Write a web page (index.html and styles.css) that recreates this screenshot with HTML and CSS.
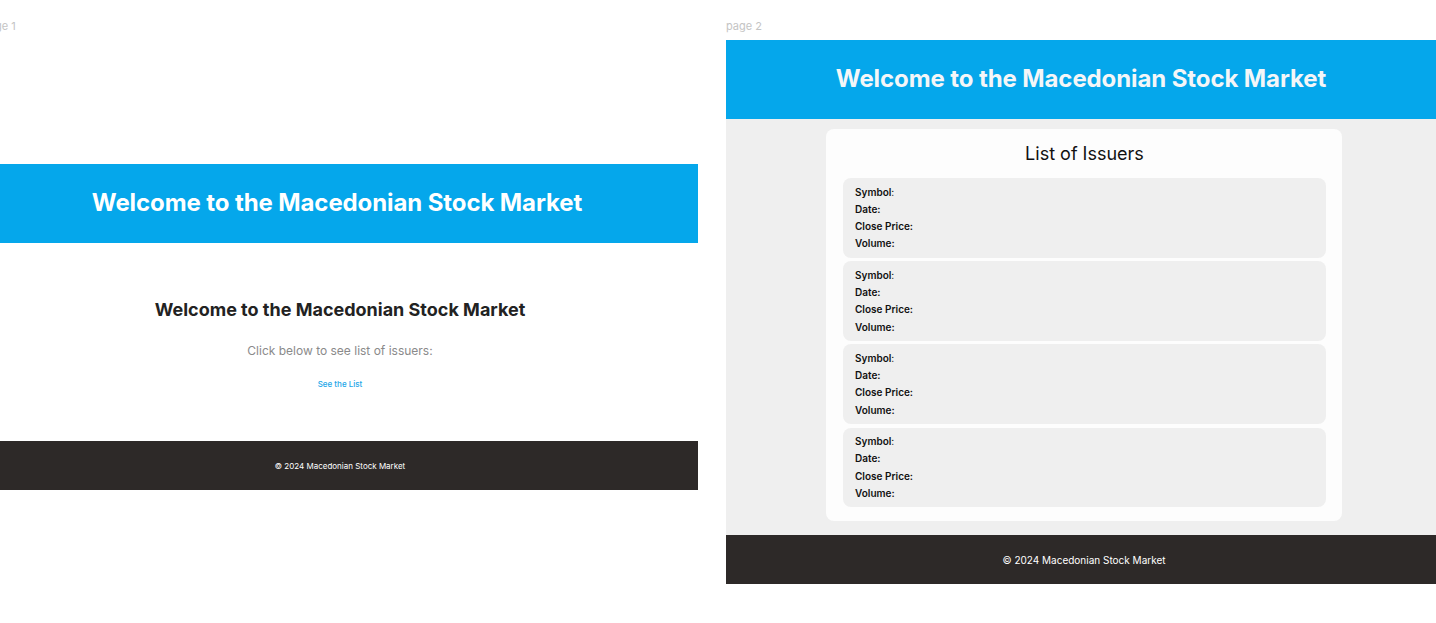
FILE: index.html
```html
<!DOCTYPE html>
<html lang="en">
<head>
<meta charset="utf-8">
<title>Macedonian Stock Market</title>
<link rel="stylesheet" href="styles.css">
</head>
<body>
<div class="canvas">
  <section class="board">
    <div class="board-label">page 1</div>
    <div class="frame frame-home">
      <header class="site-header">
        <h1>Welcome to the Macedonian Stock Market</h1>
      </header>
      <main class="home-main">
        <h2>Welcome to the Macedonian Stock Market</h2>
        <p class="lead">Click below to see list of issuers:</p>
        <a class="list-link" href="#">See the List</a>
      </main>
      <footer class="site-footer">© 2024 Macedonian Stock Market</footer>
    </div>
  </section>

  <section class="board">
    <div class="board-label">page 2</div>
    <div class="frame frame-list">
      <header class="site-header">
        <h1>Welcome to the Macedonian Stock Market</h1>
      </header>
      <main class="list-main">
        <div class="card">
          <h2 class="card-title">List of Issuers</h2>
          <div class="issuers">
            <div class="issuer">
              <div class="row">Symbol<span class="colon">:</span></div>
              <div class="row">Date:</div>
              <div class="row">Close Price:</div>
              <div class="row">Volume:</div>
            </div>
            <div class="issuer">
              <div class="row">Symbol<span class="colon">:</span></div>
              <div class="row">Date:</div>
              <div class="row">Close Price:</div>
              <div class="row">Volume:</div>
            </div>
            <div class="issuer">
              <div class="row">Symbol<span class="colon">:</span></div>
              <div class="row">Date:</div>
              <div class="row">Close Price:</div>
              <div class="row">Volume:</div>
            </div>
            <div class="issuer">
              <div class="row">Symbol<span class="colon">:</span></div>
              <div class="row">Date:</div>
              <div class="row">Close Price:</div>
              <div class="row">Volume:</div>
            </div>
          </div>
        </div>
      </main>
      <footer class="site-footer">© 2024 Macedonian Stock Market</footer>
    </div>
  </section>
</div>
</body>
</html>
```

FILE: styles.css
```css
* { box-sizing: border-box; }

html, body {
  margin: 0;
  padding: 0;
  background: #ffffff;
  overflow: hidden;
  font-family: Inter, "Noto Sans", sans-serif;
}

.canvas {
  display: flex;
  gap: 28px;
  margin-left: -18px;
  padding-top: 19px;
  width: 1500px;
}

.board {
  display: flex;
  flex-direction: column;
  width: 716px;
  flex: none;
}

.board-label {
  font-size: 11px;
  line-height: 14px;
  height: 14px;
  color: #c4c4c4;
  margin-bottom: 7px;
}

.frame {
  width: 716px;
  display: flex;
  flex-direction: column;
}

.frame-home {
  padding-top: 124px;
  background: #ffffff;
}

.site-header {
  background: #05a7eb;
  height: 79px;
  display: flex;
  align-items: center;
  justify-content: center;
  padding-right: 6px;
  padding-bottom: 2px;
}

.site-header h1 {
  margin: 0;
  color: #ffffff;
  font-size: 24px;
  font-weight: 700;
  letter-spacing: -0.1px;
}

.frame-list .site-header h1 {
  color: #f4f6f8;
}

.home-main {
  height: 198px;
  display: flex;
  flex-direction: column;
  align-items: center;
  padding-top: 55px;
}

.home-main h2 {
  margin: 0;
  font-size: 18px;
  line-height: 24px;
  font-weight: 700;
  color: #222222;
}

.lead {
  margin: 21px 0 0;
  font-size: 12px;
  line-height: 16px;
  color: #8a8a8a;
}

.list-link {
  margin-top: 20px;
  font-size: 8px;
  line-height: 10px;
  color: #1aa6e8;
  text-decoration: none;
  font-weight: 500;
}

.site-footer {
  background: #2d2928;
  height: 49px;
  display: flex;
  align-items: center;
  justify-content: center;
  color: #ffffff;
  font-size: 10px;
}

.frame-home .site-footer {
  font-size: 8px;
}

.list-main {
  background: #efefef;
  height: 416px;
  padding: 10px 0 14px;
  display: flex;
  justify-content: center;
}

.card {
  width: 516px;
  background: #fdfdfd;
  border-radius: 8px;
  padding: 0 16px 11px 17px;
  display: flex;
  flex-direction: column;
}

.card-title {
  margin: 0;
  height: 49px;
  display: flex;
  align-items: center;
  justify-content: center;
  font-size: 18px;
  font-weight: 400;
  color: #111111;
}

.issuers {
  display: flex;
  flex-direction: column;
  gap: 3.6px;
}

.issuer {
  background: #efefef;
  border-radius: 8px;
  padding: 5.5px 12px;
  height: 79.6px;
}

.row {
  font-size: 10px;
  line-height: 17.3px;
  font-weight: 600;
  color: #111111;
}

.colon {
  font-weight: 400;
}
```
